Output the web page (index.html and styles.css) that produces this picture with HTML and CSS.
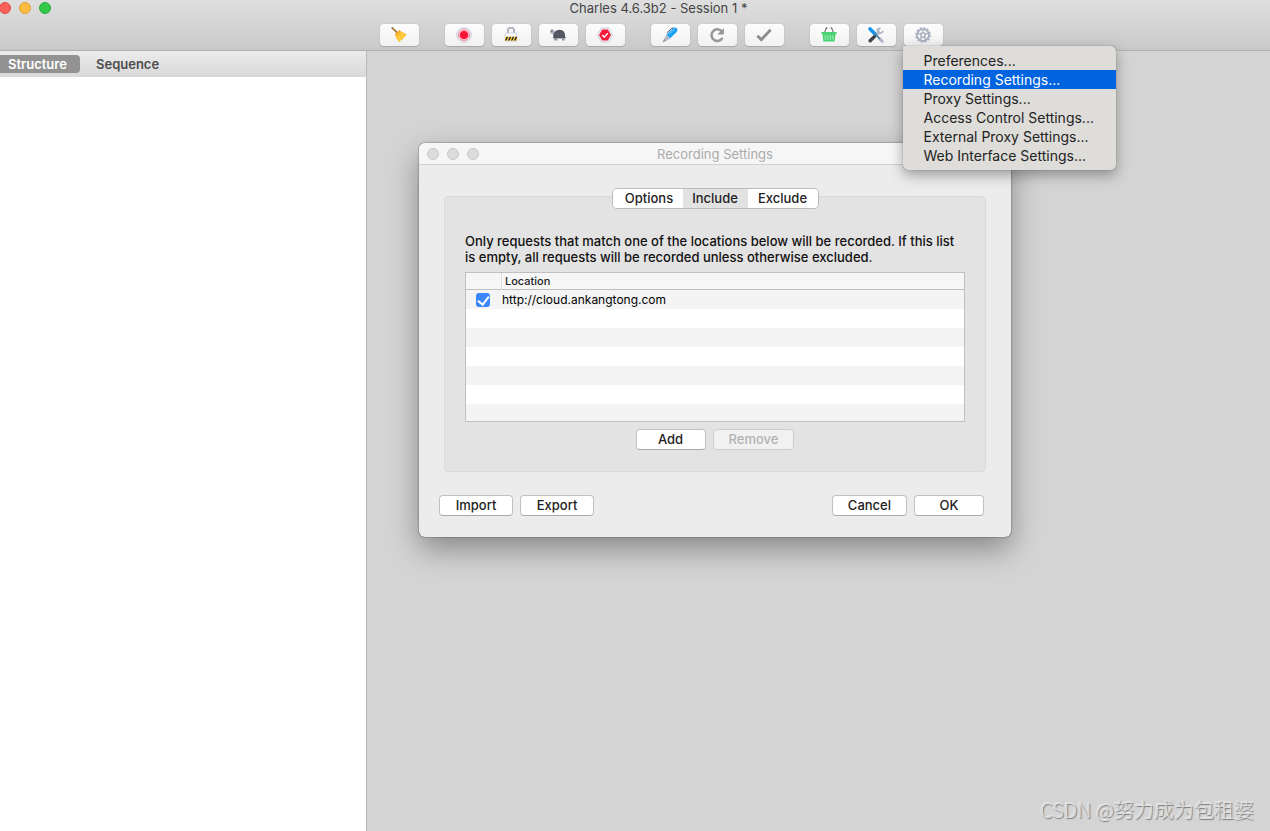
FILE: index.html
```html
<!DOCTYPE html>
<html lang="en">
<head>
<meta charset="utf-8">
<title>Charles 4.6.3b2 - Session 1 *</title>
<link rel="stylesheet" href="styles.css">
</head>
<body>
<header class="titlebar">
  <div class="lights">
    <button class="light close" aria-label="Close"></button>
    <button class="light minimise" aria-label="Minimise"></button>
    <button class="light zoom" aria-label="Zoom"></button>
  </div>
  <h1 class="window-title">Charles 4.6.3b2 - Session 1 *</h1>
  <div class="toolbar">
    <div class="group">
      <button class="tool" aria-label="Clear session">
        <svg viewBox="0 0 16 16"><path d="M1.2.8 6.4 5.8" stroke="#a8763e" stroke-width="1.8" stroke-linecap="round"/><path d="M4 7.2 8.2 3.3 15.6 7.4 14 9.4 12.8 10.8 11.6 12.4 9.8 13.2 8.4 15.2Q5 12 4 7.2Z" fill="#fbc434"/><path d="M4 7.2 8.2 3.3 9.7 4.2 4.8 9Z" fill="#f0ab2c"/><path d="m7.5 9 2 4M10 7l3 3" stroke="#ffdd6b" stroke-width=".8"/></svg>
      </button>
    </div>
    <div class="group">
      <button class="tool" aria-label="Record">
        <svg viewBox="0 0 16 16"><circle cx="8" cy="8" r="7.4" fill="#f1f1f7" stroke="#c9cad8" stroke-width=".9"/><circle cx="8" cy="8" r="5.4" fill="#fff" stroke="#f56a80" stroke-width="1"/><circle cx="8" cy="8" r="4.3" fill="#fb1738"/></svg>
      </button>
      <button class="tool" aria-label="SSL proxying">
        <svg viewBox="0 0 16 16"><path d="M4.8 6.5V3.9a3.2 3.2 0 0 1 6.4 0v2.6" fill="none" stroke="#9b9db0" stroke-width="1.7"/><path d="M4.8 6.5V3.9a3.2 3.2 0 0 1 6.4 0v2.6" fill="none" stroke="#c9cbd8" stroke-width=".7"/><rect x="2.2" y="6" width="11.6" height="8.2" rx=".8" fill="#fafafe" stroke="#c4c6d4" stroke-width=".7"/><path d="M2 9.8h12v3.8H2z" fill="#fcc42a"/><path d="m2 13.6 1.6-3.8h1.5l-1.6 3.8zm3 0 1.6-3.8h1.5l-1.6 3.8zm3 0 1.6-3.8h1.5l-1.6 3.8zm3 0 1.6-3.8H14v.5l-1.4 3.3z" fill="#292a32"/></svg>
      </button>
      <button class="tool" aria-label="Throttling">
        <svg viewBox="0 0 16 16"><path d="M0 4.6Q0 2.1 2.2 2.2 4.6 2.3 4.8 4.8l1.3 3-1 2.8Q2.7 9.4 2.6 7L.5 6.6Z" fill="#a9adbf"/><circle cx="1.8" cy="4.2" r=".6" fill="#444650"/><path d="M3.2 10.8Q3.4 2.9 9.6 2.8 15.2 3 15 9.4l1 1.9-12.8.2Z" fill="#50525d"/><path d="M4.4 7.2h10.3M7.9 3.3 7.1 11m4.3-7.7 1 7.7" stroke="#656773" stroke-width=".6"/><path d="M4.2 11.3h3.4l-.5 2.3H4.3zm7.2 0h3l.4 2.3h-2.6z" fill="#8f91a0"/></svg>
      </button>
      <button class="tool" aria-label="Breakpoints">
        <svg viewBox="0 0 16 16"><path d="M4.3 1h7.4L15.5 8l-3.8 7H4.3L.5 8Z" fill="#f1f1f7" stroke="#c6c8d7" stroke-width=".9"/><path d="M5.2 2.5h5.6L14 8l-3.2 5.5H5.2L2 8Z" fill="#f6193a"/><path d="m5.3 8 2 2.1 3.6-4" fill="none" stroke="#fff" stroke-width="1.4"/></svg>
      </button>
    </div>
    <div class="group">
      <button class="tool" aria-label="Compose">
        <svg viewBox="0 0 16 16"><path d="M5 5.8 9.3 1.5 11.4.8" fill="none" stroke="#464853" stroke-width="1"/><path d="M4.4 7.7 11 1.2Q13.5-.1 15 1.5q1 2-.6 3.8L8 11.6Z" fill="#1da0f7"/><path d="m7 7 6-5.4" stroke="#76ccff" stroke-width="1"/><path d="m4.4 7.7 3.6 3.9-3.5 2.2-2.3-2.2Z" fill="#b5b8c7"/><path d="m2.2 11.6 2.3 2.2L.5 15.6Z" fill="#9496a5"/></svg>
      </button>
      <button class="tool" aria-label="Repeat">
        <svg viewBox="0 0 16 16"><path d="M12.7 4.4A5.8 5.8 0 1 0 13.5 10.7" fill="none" stroke="#979797" stroke-width="2.5"/><path d="M14.9 1v6.6H8.3Z" fill="#979797"/></svg>
      </button>
      <button class="tool" aria-label="Validate">
        <svg viewBox="0 0 16 16"><path d="m1.4 8.7 4 4L14.6 2.8" fill="none" stroke="#8c8c8c" stroke-width="2.8"/></svg>
      </button>
    </div>
    <div class="group">
      <button class="tool" aria-label="Purchase">
        <svg viewBox="0 0 16 16"><path d="M3.5 5.6 5.4.9m7.1 4.7L10.6.9" stroke="#5a5b65" stroke-width="1"/><path d="M4.8 1.2h1.6m3.2 0h1.6" stroke="#5a5b65" stroke-width="1.2"/><path d="M.4 5h15.2v2h-1l-1 7.6H2.4L1.4 7h-1z" fill="#4bd376"/><path d="M4.2 8.3v4.5m2.6-4.5v4.5m2.5-4.5v4.5m2.6-4.5v4.5" stroke="#a3edba" stroke-width="1"/></svg>
      </button>
      <button class="tool" aria-label="Tools">
        <svg viewBox="0 0 16 16"><path d="M15.2 3 12.8 5.2l-1.9-1.7L13.2.9Q10-.2 8.6 2.1 8.2 3.7 8.8 4.9L7.2 6.9l2 2 2-1.7q3.2.4 4.3-2.1.2-1.3-.3-2.1Z" fill="#b4b8c9"/><path d="m6.6 9.4-4.4 4.4" stroke="#3e404b" stroke-width="3.4" stroke-linecap="round"/><path d="m11.6 11.6 2.6 2.6" stroke="#b0b3c4" stroke-width="3" stroke-linecap="round"/><path d="m2.1 1.9 4.5 4.6" stroke="#1595f2" stroke-width="3.6" stroke-linecap="round"/><path d="m6.5 6.4 5.2 5.2" stroke="#4a7fa5" stroke-width="1.6"/></svg>
      </button>
      <div class="menu-anchor">
        <button class="tool" aria-label="Settings" aria-haspopup="menu" aria-expanded="true">
          <svg viewBox="0 0 16 16" fill="none" stroke="#a9adc0"><circle cx="8" cy="8" r="7.1" stroke-width="1.5" stroke-dasharray="2.2 1.517"/><circle cx="8" cy="8" r="5.9" stroke-width="1.7"/><circle cx="8" cy="8" r="2.2" stroke-width="1.4"/><path d="M8 5.8V2.3M10 7.3l3.4-1.1M9.3 9.8l2 2.8M6.7 9.8l-2 2.8M6 7.3 2.6 6.2" stroke-width="1.3"/></svg>
        </button>
        <div class="menu" role="menu">
          <button class="menu-item" role="menuitem">Preferences...</button>
          <button class="menu-item selected" role="menuitem">Recording Settings...</button>
          <button class="menu-item" role="menuitem">Proxy Settings...</button>
          <button class="menu-item" role="menuitem">Access Control Settings...</button>
          <button class="menu-item" role="menuitem">External Proxy Settings...</button>
          <button class="menu-item" role="menuitem">Web Interface Settings...</button>
        </div>
      </div>
    </div>
  </div>
</header>
<main class="workspace">
  <aside class="sidebar">
    <nav class="view-tabs">
      <button class="view-tab active">Structure</button>
      <button class="view-tab">Sequence</button>
    </nav>
  </aside>
  <section class="content">
    <form class="dialog" role="dialog" aria-labelledby="dialog-title">
      <div class="dialog-bar">
        <div class="dialog-lights"><i></i><i></i><i></i></div>
        <h2 class="dialog-title" id="dialog-title">Recording Settings</h2>
      </div>
      <div class="dialog-body">
        <div class="segments">
          <button type="button" class="segment">Options</button>
          <button type="button" class="segment current">Include</button>
          <button type="button" class="segment">Exclude</button>
        </div>
        <div class="panel">
          <p class="hint">Only requests that match one of the locations below will be recorded. If this list is empty, all requests will be recorded unless otherwise excluded.</p>
          <div class="table-frame">
            <table class="locations">
              <thead><tr><th class="check-col"></th><th>Location</th></tr></thead>
              <tbody>
                <tr><td class="check-col"><input class="check" type="checkbox" id="location-1" checked></td><td><label for="location-1">http://cloud.ankangtong.com</label></td></tr>
                <tr><td></td><td></td></tr>
                <tr><td></td><td></td></tr>
                <tr><td></td><td></td></tr>
                <tr><td></td><td></td></tr>
                <tr><td></td><td></td></tr>
                <tr><td></td><td></td></tr>
              </tbody>
            </table>
          </div>
          <div class="row-actions">
            <button type="button" class="push short">Add</button>
            <button type="button" class="push" disabled>Remove</button>
          </div>
        </div>
        <div class="dialog-actions">
          <button type="button" class="push">Import</button>
          <button type="button" class="push">Export</button>
          <button type="button" class="push first-right">Cancel</button>
          <button type="button" class="push short">OK</button>
        </div>
      </div>
    </form>
    <p class="watermark">CSDN @努力成为包租婆</p>
  </section>
</main>
</body>
</html>
```
FILE: styles.css
```css
* { box-sizing: border-box; }

body {
  margin: 0;
  min-height: 100vh;
  display: flex;
  flex-direction: column;
  font: 13px/16px Inter, "Liberation Sans", sans-serif;
  color: #222;
  background: #d4d4d4;
}

button { font: inherit; color: inherit; border: 0; padding: 0; margin: 0; }
h1, h2, p { margin: 0; font-weight: 400; }

/* Window title bar and toolbar */
.titlebar {
  position: relative;
  z-index: 2;
  height: 51px;
  border-bottom: 1px solid #b0b0b0;
  background: linear-gradient(#dfdfdf, #c9c9c9);
}
.lights { position: absolute; left: -1px; top: 2px; display: flex; gap: 8px; }
.light { width: 12px; height: 12px; border-radius: 50%; }
.close { background: #fc605b; border: 1px solid #e04a45; }
.minimise { background: #fdbc40; border: 1px solid #dfa035; }
.zoom { background: #34c84a; border: 1px solid #24ad36; }
.window-title {
  padding-left: 47px;
  font-size: 13px;
  line-height: 17px;
  text-align: center;
  color: #444;
}
.toolbar { display: flex; justify-content: center; gap: 26px; padding: 7px 0 0 52px; }
.group { display: flex; gap: 8px; }
.tool {
  display: grid;
  place-items: center;
  width: 39px;
  height: 22px;
  border-radius: 4px;
  background: linear-gradient(#fdfdfd, #f1f1f1);
  box-shadow: 0 0 1px #999, 0 1px 1px #aaa;
}
.tool svg { width: 16px; height: 16px; }

.menu-anchor { position: relative; }
.menu {
  position: absolute;
  left: -1px;
  top: 22px;
  width: 213px;
  padding: 5px 0;
  border-radius: 0 5px 5px 5px;
  background: #deddd9;
  box-shadow: 0 0 1px #555, 0 5px 14px rgba(0, 0, 0, .35);
}
.menu-item {
  display: block;
  width: 100%;
  padding-left: 21px;
  font-size: 14px;
  line-height: 19px;
  text-align: left;
  background: none;
}
.menu-item.selected { background: #0064e1; color: #fff; }

/* Workspace */
.workspace { flex: 1; display: flex; }
.sidebar { width: 367px; background: #fff; border-right: 1px solid #b9b9b9; }
.view-tabs {
  display: flex;
  gap: 8px;
  height: 26px;
  padding: 4px 0;
  background: linear-gradient(#ececec, #d8d8d8);
}
.view-tab {
  padding: 0 8px;
  font-weight: 600;
  line-height: 18px;
  color: #4c4c4c;
  background: none;
}
.view-tab.active {
  width: 80px;
  border-radius: 0 4px 4px 0;
  text-align: left;
  color: #fff;
  background: #929292;
}
.content { position: relative; flex: 1; }

/* Recording settings dialog */
.dialog {
  position: absolute;
  left: 52px;
  top: 92px;
  width: 592px;
  border-radius: 6px;
  background: #ececec;
  box-shadow: 0 0 1px #555, 0 0 2px rgba(0, 0, 0, .4), 0 12px 30px rgba(0, 0, 0, .36);
}
.dialog-bar {
  display: flex;
  align-items: center;
  height: 22px;
  border-bottom: 1px solid #d1d1d1;
  border-radius: 6px 6px 0 0;
  background: #f6f6f6;
}
.dialog-lights { display: flex; gap: 8px; width: 60px; padding-left: 8px; }
.dialog-lights i {
  width: 12px;
  height: 12px;
  border: 1px solid #c8c8c8;
  border-radius: 50%;
  background: #dcdcdc;
}
.dialog-title {
  flex: 1;
  padding-right: 60px;
  font-size: 13px;
  line-height: 18px;
  text-align: center;
  color: #ababab;
}
.dialog-body { padding: 23px 25px 21px; }

.segments {
  position: relative;
  display: flex;
  width: max-content;
  margin: 0 auto -13px;
  overflow: hidden;
  border: 1px solid #bbb;
  border-radius: 5px;
}
.segment {
  width: 70px;
  line-height: 19px;
  font-weight: 500;
  background: #fff;
}
.segment:first-child { padding-left: 3px; }
.segment.current { width: 65px; background: #e2e2e2; }

.panel {
  padding: 36px 20px 21px;
  border: 1px solid #dadada;
  border-radius: 4px;
  background: #e3e3e3;
}
.hint { font-weight: 500; color: #111; }
.table-frame {
  height: 150px;
  margin-top: 7px;
  overflow: hidden;
  border: 1px solid #c0c0c0;
  background: #fff;
}
.locations { width: 100%; border-spacing: 0; table-layout: fixed; }
.locations th {
  height: 17px;
  padding: 0 3px;
  font-size: 11px;
  line-height: 16px;
  font-weight: 500;
  text-align: left;
  border-bottom: 1px solid #c0c0c0;
  background: #f6f6f6;
}
.locations .check-col { width: 36px; padding: 0 10px; }
.locations th.check-col { border-right: 1px solid #dcdcdc; }
.locations td { height: 19px; padding: 0; font-size: 12px; line-height: 19px; color: #000; }
.locations tbody tr:nth-child(odd) { background: #f4f4f4; }
.check {
  appearance: none;
  display: grid;
  justify-content: center;
  align-content: start;
  width: 14px;
  height: 14px;
  margin: 0;
  border-radius: 3px;
  background: #3b87fa;
}
.check:checked::after {
  content: "";
  width: 5px;
  height: 9px;
  margin-top: 1px;
  border: solid #fff;
  border-width: 0 2px 2px 0;
  transform: rotate(38deg);
}

.push {
  min-width: 74px;
  height: 21px;
  padding: 0 15px;
  border: 1px solid #c1c1c1;
  border-bottom-color: #aaa;
  border-radius: 4px;
  font-weight: 500;
  line-height: 19px;
  background: #fff;
}
.push.short { min-width: 70px; }
.push:disabled { color: #b3b3b3; border-color: #cdcdcd; background: #f1f1f1; }
.row-actions { display: flex; justify-content: center; gap: 7px; margin-top: 7px; }
.dialog-actions { display: flex; gap: 7px; margin: 23px 2px 0 -5px; }
.first-right { margin-left: auto; }

.watermark {
  position: absolute;
  right: 16px;
  bottom: 9px;
  font: 300 20px/24px "Noto Sans CJK SC", sans-serif;
  color: #dcdcdc;
  text-shadow: 1px 1px 1px #777, -1px -1px 0 #e4e4e4;
}
```
